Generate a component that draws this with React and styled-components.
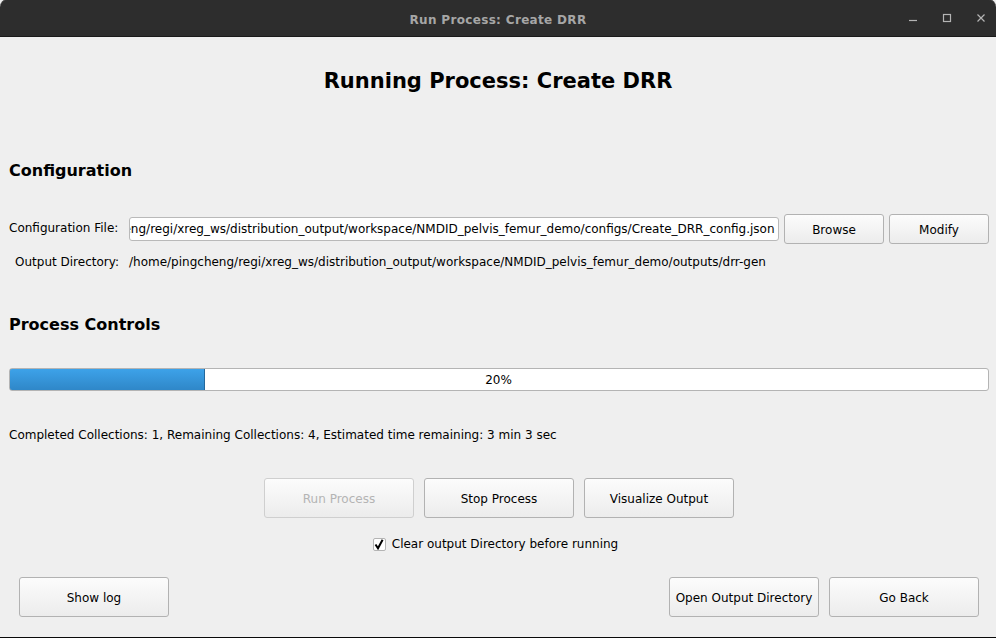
import React, { useEffect, useRef } from "react";
import styled, { createGlobalStyle } from "styled-components";

const Global = createGlobalStyle`
  html, body { margin: 0; padding: 0; background: #000; }
  body { font-family: "DejaVu Sans", sans-serif; font-size: 12px; color: #000; }
  #root { width: 996px; height: 638px; overflow: hidden; }
`;

const Window = styled.div`
  width: 996px;
  height: 637px;
  background: #efefef;
  display: flex;
  flex-direction: column;
  border-bottom: 1px solid #0a0a0a;
`;

const TitleBar = styled.header`
  height: 36px;
  flex: none;
  box-sizing: content-box;
  background: #2d2d2d;
  border-top: 1px solid #3a3a3a;
  margin-top: -1px;
  border-bottom: 1px solid #1a1a1a;
  border-radius: 8px 8px 0 0;
  position: relative;
  display: flex;
  align-items: center;
  justify-content: center;
`;

const TitleText = styled.span`
  font-weight: 700;
  font-size: 12px;
  color: #a6a6a6;
  letter-spacing: 0.33px;
  padding-top: 3px;
`;

const WindowControls = styled.div`
  position: absolute;
  top: 0;
  right: 0;
  height: 36px;
  display: flex;
  align-items: center;
`;

const ControlIcon = styled.svg`
  width: 34px;
  height: 36px;
  display: block;
  stroke: #b4b4b4;
  fill: none;
  stroke-width: 1.2;
`;

const Content = styled.main`
  flex: 1;
  display: flex;
  flex-direction: column;
  padding: 0 7px 0 9px;
  min-height: 0;
`;

const Heading = styled.h1`
  margin: 31px 0 0;
  padding-right: 2px;
  height: 26px;
  line-height: 26px;
  text-align: center;
  font-size: 21px;
  font-weight: 700;
`;

const SectionTitle = styled.h2`
  margin: ${(p) => p.$top}px 0 0;
  height: 20px;
  line-height: 20px;
  font-size: 16px;
  font-weight: 700;
`;

const ConfigRow = styled.div`
  margin-top: 33px;
  display: flex;
  align-items: center;
  height: 30px;
`;

const FieldLabel = styled.label`
  width: 109px;
  flex: none;
  text-align: right;
  margin-right: 11px;
  white-space: nowrap;
  position: relative;
  top: -1px;
`;

const PathInput = styled.input`
  width: 650px;
  height: 24px;
  box-sizing: border-box;
  flex: none;
  background: #fff;
  border: 1px solid #b9b9b9;
  border-radius: 3px;
  padding: 0 3px 0 0;
  margin: 0;
  outline: none;
  color: #000;
  font-family: "DejaVu Sans", sans-serif;
  font-size: 12px;
`;

const Button = styled.button`
  flex: none;
  width: ${(p) => p.$w || 150}px;
  height: ${(p) => p.$h || 40}px;
  box-sizing: border-box;
  padding: 2px 0 0;
  font-family: "DejaVu Sans", sans-serif;
  font-size: 12px;
  color: ${(p) => (p.disabled ? "#b4b4b4" : "#000")};
  background: linear-gradient(#fcfcfc, #ececec);
  border: 1px solid ${(p) => (p.disabled ? "#cfcfcf" : "#b2b2b2")};
  border-radius: 3px;
  white-space: nowrap;
`;

const RowButtons = styled.div`
  display: flex;
  gap: 5px;
  margin-left: 5px;
`;

const OutputRow = styled.div`
  margin-top: 10px;
  display: flex;
  align-items: center;
  height: 16px;
  white-space: nowrap;
`;

const OutputLabel = styled(FieldLabel)`
  top: 0;
  width: 110px;
  margin-right: 10px;
`;

const Progress = styled.div`
  margin-top: 33px;
  height: 23px;
  box-sizing: border-box;
  background: #fff;
  border: 1px solid #b4b4b4;
  border-radius: 3px;
  position: relative;
  display: flex;
  align-items: center;
  justify-content: center;
  overflow: hidden;
  width: 980px;
`;

const ProgressFill = styled.div`
  position: absolute;
  left: -1px;
  top: -1px;
  bottom: -1px;
  background: linear-gradient(#3da2e9, #2f87c8);
  border: 1px solid #24689c;
  border-radius: 3px 0 0 3px;
  box-sizing: border-box;
`;

const ProgressLabel = styled.span`
  position: relative;
  padding-top: 1px;
  margin-left: -1px;
`;

const Status = styled.p`
  margin: 36px 0 0;
  height: 16px;
  line-height: 16px;
  white-space: nowrap;
`;

const ActionRow = styled.div`
  margin-top: 35px;
  display: flex;
  justify-content: center;
  gap: 10px;
  width: 980px;
`;

const CheckRow = styled.div`
  margin-top: 18px;
  height: 16px;
  display: flex;
  align-items: center;
  justify-content: center;
  gap: 6px;
  width: 973px;
`;

const CheckBox = styled.span`
  width: 13px;
  height: 13px;
  box-sizing: border-box;
  background: #fff;
  border: 1px solid #b4b4b4;
  border-radius: 2px;
  display: flex;
`;

const Footer = styled.div`
  margin-top: 25px;
  padding: 0 10px;
  width: 980px;
  box-sizing: border-box;
  display: flex;
  gap: 10px;
`;

const Spacer = styled.div`
  flex: 1;
`;

const fullPath =
  "/home/pingcheng/regi/xreg_ws/distribution_output/workspace/NMDID_pelvis_femur_demo/configs/Create_DRR_config.json";

export default function App() {
  const inputRef = useRef(null);
  useEffect(() => {
    if (inputRef.current) inputRef.current.scrollLeft = inputRef.current.scrollWidth;
  }, []);
  return (
    <>
      <Global />
      <Window>
        <TitleBar>
          <TitleText>Run Process: Create DRR</TitleText>
          <WindowControls>
            <ControlIcon viewBox="0 0 34 36">
              <path d="M15 20.5h8" />
            </ControlIcon>
            <ControlIcon viewBox="0 0 34 36">
              <rect x="15.5" y="14.5" width="7" height="7" />
            </ControlIcon>
            <ControlIcon viewBox="0 0 34 36">
              <path d="M15.5 14.5l7 7M22.5 14.5l-7 7" />
            </ControlIcon>
          </WindowControls>
        </TitleBar>
        <Content>
          <Heading>Running Process: Create DRR</Heading>
          <SectionTitle $top={67}>Configuration</SectionTitle>
          <ConfigRow>
            <FieldLabel>Configuration File:</FieldLabel>
            <PathInput ref={inputRef} value={fullPath} readOnly />
            <RowButtons>
              <Button $w={100} $h={30}>Browse</Button>
              <Button $w={100} $h={30}>Modify</Button>
            </RowButtons>
          </ConfigRow>
          <OutputRow>
            <OutputLabel>Output Directory:</OutputLabel>
            <span>/home/pingcheng/regi/xreg_ws/distribution_output/workspace/NMDID_pelvis_femur_demo/outputs/drr-gen</span>
          </OutputRow>
          <SectionTitle $top={45}>Process Controls</SectionTitle>
          <Progress>
            <ProgressFill style={{ width: "20%" }} />
            <ProgressLabel>20%</ProgressLabel>
          </Progress>
          <Status>Completed Collections: 1, Remaining Collections: 4, Estimated time remaining: 3 min 3 sec</Status>
          <ActionRow>
            <Button disabled>Run Process</Button>
            <Button>Stop Process</Button>
            <Button>Visualize Output</Button>
          </ActionRow>
          <CheckRow>
            <CheckBox>
              <svg width="11" height="11" viewBox="0 0 11 11">
                <path d="M1.5 5.5L4 9.3 8.6 0.8" fill="none" stroke="#000" strokeWidth="2" />
              </svg>
            </CheckBox>
            <span>Clear output Directory before running</span>
          </CheckRow>
          <Footer>
            <Button>Show log</Button>
            <Spacer />
            <Button>Open Output Directory</Button>
            <Button>Go Back</Button>
          </Footer>
        </Content>
      </Window>
    </>
  );
}
